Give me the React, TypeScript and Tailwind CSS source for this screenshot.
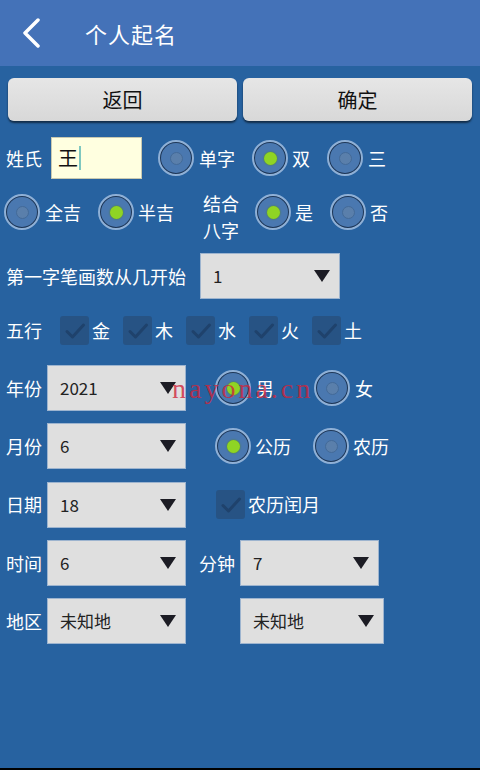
import React from 'react';

const font = { fontFamily: '"Noto Sans CJK SC", "Noto Sans", sans-serif' };

function Radio({ checked = false, className = '' }: { checked?: boolean; className?: string }) {
  return (
    <div
      className={`flex h-[36px] w-[36px] shrink-0 items-center justify-center rounded-full border-2 border-[#8fb0d6] bg-[#1d3657] ${className}`}
    >
      <div className="flex h-[30px] w-[30px] items-center justify-center rounded-full bg-[#4a78b0]">
        {checked ? (
          <div className="h-[13px] w-[13px] rounded-full bg-[#8fd424] shadow-[0_0_2px_#5a8a10]" />
        ) : (
          <div className="h-[13px] w-[13px] rounded-full border border-[#436a98] bg-[#5a7fab]" />
        )}
      </div>
    </div>
  );
}

function Check({ className = '' }: { className?: string }) {
  return (
    <div className={`flex h-[29px] w-[29px] shrink-0 items-center justify-center rounded-[3px] bg-[#275384] ${className}`}>
      <svg width="22" height="22" viewBox="0 0 22 22" fill="none">
        <path d="M3 11.5 L8.5 17 L19.5 5" stroke="#1f426c" strokeWidth="3" strokeLinecap="round" strokeLinejoin="round" />
      </svg>
    </div>
  );
}

function Select({ value, className = '' }: { value: string; className?: string }) {
  return (
    <div
      className={`flex h-[46px] shrink-0 items-center justify-between border border-[#9db4cf] bg-[#dfdfdf] pl-[12px] pr-[9px] text-[17px] text-[#222] ${className}`}
    >
      <span>{value}</span>
      <svg width="16" height="12" viewBox="0 0 16 12">
        <path d="M0 0 H16 L8 12 Z" fill="#1c1c24" />
      </svg>
    </div>
  );
}

export default function App() {
  return (
    <div style={font} className="relative flex h-[770px] w-[480px] flex-col overflow-hidden border-b-2 border-black bg-[#2762a0] text-[18px] text-white">
      {/* 标题栏 */}
      <div className="flex h-[66px] shrink-0 items-center bg-[#4472b8]">
        <svg className="ml-[21px]" width="20" height="30" viewBox="0 0 20 30" fill="none">
          <path d="M17 2 L4 15 L17 28" stroke="white" strokeWidth="3.5" strokeLinecap="round" strokeLinejoin="round" />
        </svg>
        <span className="ml-[44px] text-[22px] tracking-[1px]">个人起名</span>
      </div>

      {/* 按钮 */}
      <div className="mt-[12px] flex gap-[6px] px-[8px]">
        <button className="h-[43px] flex-1 rounded-[6px] bg-gradient-to-b from-[#e6e6e6] to-[#d8d8d8] text-[20px] text-[#111] shadow-[0_2px_2px_rgba(0,0,0,0.55)]">
          返回
        </button>
        <button className="h-[43px] flex-1 rounded-[6px] bg-gradient-to-b from-[#e6e6e6] to-[#d8d8d8] text-[20px] text-[#111] shadow-[0_2px_2px_rgba(0,0,0,0.55)]">
          确定
        </button>
      </div>

      {/* 姓氏 */}
      <div className="mt-[16px] flex h-[42px] items-center pl-[6px]">
        <span className="w-[45px]">姓氏</span>
        <div className="flex h-[42px] w-[91px] items-center border border-[#c9c9b0] bg-[#ffffe0] pl-[6px] text-[20px] text-[#111]">
          王<span className="ml-[1px] h-[24px] w-[2px] bg-[#7fc8c0]" />
        </div>
        <Radio className="ml-[16px]" />
        <span className="ml-[5px]">单字</span>
        <Radio checked className="ml-[17px]" />
        <span className="ml-[4px]">双</span>
        <Radio className="ml-[17px]" />
        <span className="ml-[5px]">三</span>
      </div>

      {/* 全吉/半吉 */}
      <div className="mt-[11px] flex h-[54px] items-start pl-[4px]">
        <Radio className="mt-[4px]" />
        <span className="ml-[5px] mt-[9px]">全吉</span>
        <Radio checked className="ml-[17px] mt-[4px]" />
        <span className="ml-[4px] mt-[9px]">半吉</span>
        <span className="ml-[29px] w-[36px] leading-[27px]">结合八字</span>
        <Radio checked className="ml-[16px] mt-[4px]" />
        <span className="ml-[4px] mt-[9px]">是</span>
        <Radio className="ml-[17px] mt-[4px]" />
        <span className="ml-[4px] mt-[9px]">否</span>
      </div>

      {/* 笔画 */}
      <div className="mt-[9px] flex h-[46px] items-center pl-[6px]">
        <span className="w-[194px]">第一字笔画数从几开始</span>
        <Select value="1" className="w-[140px]" />
      </div>

      {/* 五行 */}
      <div className="mt-[17px] flex h-[29px] items-center pl-[6px]">
        <span className="w-[54px]">五行</span>
        {['金', '木', '水', '火', '土'].map((t) => (
          <div key={t} className="flex w-[63px] items-center">
            <Check />
            <span className="ml-[3px]">{t}</span>
          </div>
        ))}
      </div>

      {/* 年份 */}
      <div className="mt-[20px] flex h-[46px] items-center pl-[6px]">
        <span className="w-[41px]">年份</span>
        <Select value="2021" className="w-[139px]" />
        <Radio checked className="ml-[29px] h-[35px] w-[35px]" />
        <span className="ml-[5px]">男</span>
        <Radio className="ml-[40px] h-[35px] w-[35px]" />
        <span className="ml-[5px]">女</span>
      </div>

      {/* 月份 */}
      <div className="mt-[12px] flex h-[46px] items-center pl-[6px]">
        <span className="w-[41px]">月份</span>
        <Select value="6" className="w-[139px]" />
        <Radio checked className="ml-[29px] h-[35px] w-[35px]" />
        <span className="ml-[4px]">公历</span>
        <Radio className="ml-[22px] h-[35px] w-[35px]" />
        <span className="ml-[4px]">农历</span>
      </div>

      {/* 日期 */}
      <div className="mt-[13px] flex h-[45px] items-center pl-[6px]">
        <span className="w-[41px]">日期</span>
        <Select value="18" className="h-[45px] w-[139px]" />
        <Check className="ml-[30px]" />
        <span className="ml-[3px]">农历闰月</span>
      </div>

      {/* 时间 */}
      <div className="mt-[13px] flex h-[46px] items-center pl-[6px]">
        <span className="w-[41px]">时间</span>
        <Select value="6" className="w-[139px]" />
        <span className="ml-[13px] w-[41px]">分钟</span>
        <Select value="7" className="w-[139px]" />
      </div>

      {/* 地区 */}
      <div className="mt-[12px] flex h-[46px] items-center pl-[6px]">
        <span className="w-[41px]">地区</span>
        <Select value="未知地" className="w-[139px]" />
        <Select value="未知地" className="ml-[54px] w-[144px]" />
      </div>

      {/* 水印 */}
      <span
        className="pointer-events-none absolute left-[172px] top-[368px] text-[28px] tracking-[3px] text-[#d0243a]/80"
        style={{ fontFamily: '"Liberation Serif", serif' }}
      >
        nayona.cn
      </span>
    </div>
  );
}
